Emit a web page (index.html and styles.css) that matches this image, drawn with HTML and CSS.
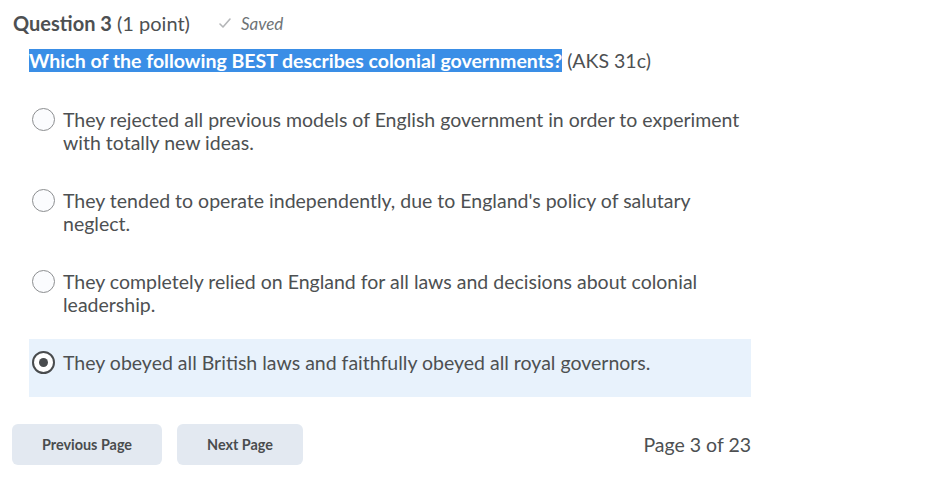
FILE: index.html
```html
<!DOCTYPE html>
<html lang="en">
<head>
  <meta charset="UTF-8">
  <title>Question 3</title>
  <link rel="stylesheet" href="styles.css">
</head>
<body>
  <div class="page">
    <!-- Question header -->
    <div class="q-header">
      <span class="q-title"><b>Question 3</b> (1 point)</span>
      <span class="q-saved">
        <svg class="check" width="16" height="16" viewBox="0 0 16 16"><path d="M3 9 L6 12 L13 4" fill="none" stroke="#b4b6b8" stroke-width="1.6" stroke-linecap="round" stroke-linejoin="round"/></svg>
        <i>Saved</i>
      </span>
    </div>

    <div class="q-body">
      <p class="q-text"><span class="hl">Which of the following BEST describes colonial governments?</span> (AKS 31c)</p>

      <div class="options">
        <label class="option">
          <span class="radio"></span>
          <span class="opt-text">They rejected all previous models of English government in order to experiment with totally new ideas.</span>
        </label>
        <label class="option">
          <span class="radio"></span>
          <span class="opt-text">They tended to operate independently, due to England's policy of salutary neglect.</span>
        </label>
        <label class="option">
          <span class="radio"></span>
          <span class="opt-text">They completely relied on England for all laws and decisions about colonial leadership.</span>
        </label>
        <label class="option selected">
          <span class="radio checked"></span>
          <span class="opt-text">They obeyed all British laws and faithfully obeyed all royal governors.</span>
        </label>
      </div>
    </div>

    <!-- Paging -->
    <div class="pager">
      <button type="button" class="btn">Previous Page</button>
      <button type="button" class="btn">Next Page</button>
      <span class="page-count">Page 3 of 23</span>
    </div>
  </div>
</body>
</html>
```

FILE: styles.css
```css
body {
  margin: 0;
  padding: 0;
  background: #fff;
  font-family: Lato, "Open Sans", sans-serif;
  color: #4d5052;
}
.page {
  width: 751px;
  padding-top: 10px;
}
.q-header {
  display: flex;
  align-items: center;
  padding-left: 13px;
  height: 26px;
}
.q-title {
  font-size: 20px;
}
.q-title b {
  font-weight: 700;
}
.q-saved {
  display: flex;
  align-items: center;
  margin-left: 27px;
  font-size: 17px;
  color: #6e7376;
}
.q-saved .check {
  margin-right: 8px;
}
.q-body {
  padding-left: 29px;
}
.q-text {
  margin: 14px 0 0;
  font-size: 19.5px;
  line-height: 22px;
}
.hl {
  background: #3a8ee6;
  color: #fff;
  font-weight: 700;
}
.options {
  margin-top: 24px;
}
.option {
  display: flex;
  align-items: flex-start;
  padding: 12px 0 23px 3px;
  font-size: 19.5px;
  line-height: 23px;
}
.option.selected {
  background: #e8f2fc;
}
.radio {
  flex: none;
  box-sizing: border-box;
  width: 23px;
  height: 23px;
  margin-right: 8px;
  border: 1px solid #8c8e90;
  border-radius: 50%;
  background: #fbfcfe;
  position: relative;
}
.radio.checked {
  border: 2px solid #494c4e;
  background: #fff;
}
.radio.checked::after {
  content: "";
  position: absolute;
  left: 5px;
  top: 5px;
  width: 9px;
  height: 9px;
  border-radius: 50%;
  background: #494c4e;
}
.opt-text {
  max-width: 688px;
}
.pager {
  display: flex;
  align-items: center;
  margin-top: 27px;
  padding-left: 12px;
}
.btn {
  height: 41px;
  padding: 0 30px;
  margin-right: 15px;
  border: none;
  border-radius: 6px;
  background: #e3e9f1;
  color: #494c4e;
  font-family: Lato, sans-serif;
  font-size: 14.4px;
  font-weight: 700;
}
.page-count {
  margin-left: auto;
  font-size: 19.5px;
}
```
